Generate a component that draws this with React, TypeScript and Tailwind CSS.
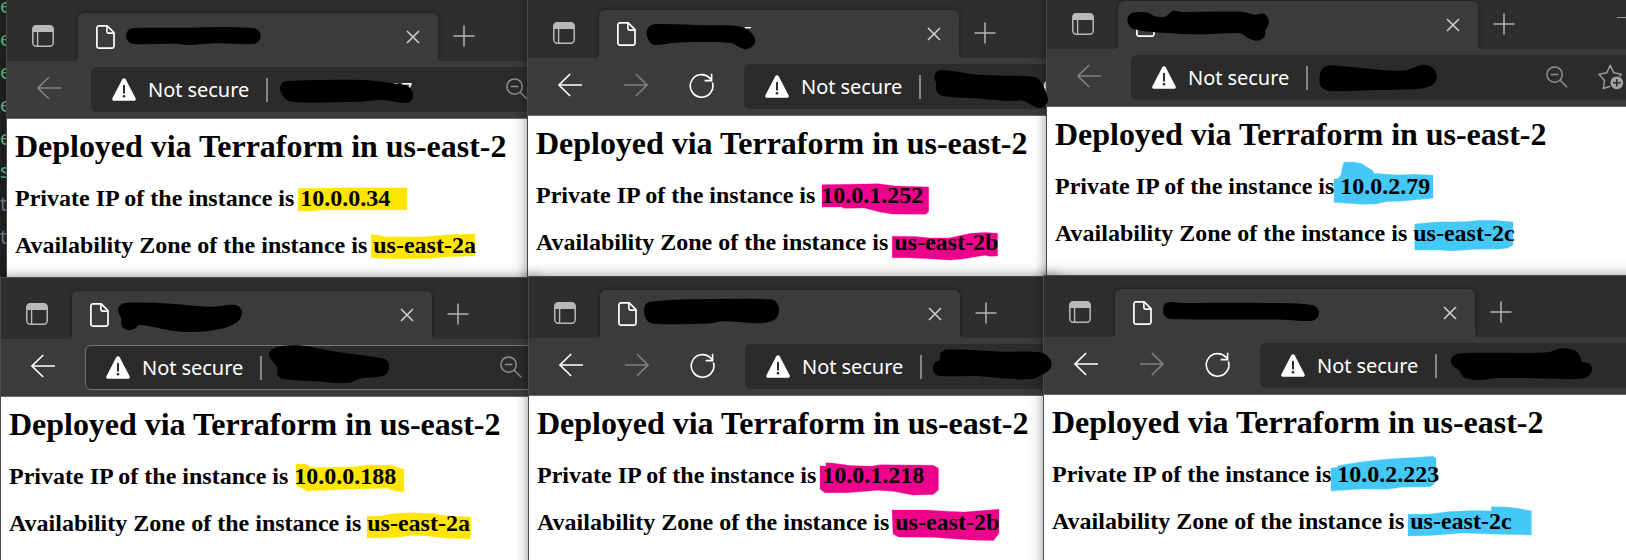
import React from "react";

type Pt = [number, number];

/** Closed smooth outline through the given points, as drawn by a soft marker. */
function outline(points: Pt[]): string {
  const n = points.length;
  const tangent = points.map((_, i) => {
    const a = points[(i + n - 1) % n];
    const b = points[(i + 1) % n];
    const dx = b[0] - a[0];
    const dy = b[1] - a[1];
    const len = Math.hypot(dx, dy) || 1;
    return [dx / len, dy / len] as Pt;
  });
  let d = `M${points[0][0]} ${points[0][1]}`;
  for (let i = 0; i < n; i++) {
    const j = (i + 1) % n;
    const p = points[i];
    const q = points[j];
    const k = Math.hypot(q[0] - p[0], q[1] - p[1]) / 3;
    d += `C${p[0] + tangent[i][0] * k} ${p[1] + tangent[i][1] * k} ${q[0] - tangent[j][0] * k} ${q[1] - tangent[j][1] * k} ${q[0]} ${q[1]}`;
  }
  return d + "Z";
}

const SCRIBBLES: Pt[][] = [
  [[126, 36], [128.6, 30], [134.3, 28], [189.4, 27.8], [220.4, 27], [253, 28], [258.3, 30.5], [260.7, 36], [258.3, 41.5], [253, 44], [220.4, 43.3], [206.6, 43.7], [187.7, 45], [175.6, 43.7], [134.3, 44], [128.6, 41.7]],
  [[280, 89], [281.8, 83.5], [287, 81], [361.6, 80], [389, 82.7], [406, 85.5], [411, 89], [413, 95], [411, 101], [406, 103], [382, 100], [358, 101.7], [292.7, 102], [284.4, 98]],
  [[646.7, 32.7], [649, 26.7], [656, 24], [706, 25.3], [737, 26], [747.3, 29.5], [754.4, 37], [754.4, 44], [747.3, 49], [740.4, 47.7], [730.7, 43], [699, 42], [671.5, 43], [654.3, 45], [649, 40.7]],
  [[934.3, 77.3], [936.7, 71.8], [943.6, 70], [978, 74.7], [1033, 76.7], [1040, 80.7], [1047.9, 98.3], [1045, 105.7], [1038, 107.7], [1022.8, 100.7], [1009, 101], [974.6, 98.3], [941.8, 95.7], [936.2, 90.7], [936.2, 83.3]],
  [[1127.4, 20.7], [1130.4, 14], [1138, 12], [1148.4, 12.7], [1154, 15.7], [1165.2, 16.7], [1172.7, 11], [1182, 12], [1241.8, 11.7], [1254.9, 14.7], [1264.2, 14], [1269, 21.7], [1265.5, 30], [1264.2, 37.3], [1256.7, 40.7], [1247.4, 37.7], [1240, 33.3], [1204.4, 34.3], [1178.3, 33.7], [1133.4, 29]],
  [[1319.5, 81.7], [1321, 71], [1327.7, 65.7], [1357.6, 67.7], [1395, 70.7], [1408, 69.7], [1423, 64.7], [1432.4, 67.7], [1436.9, 76.7], [1432.4, 85], [1417.4, 89], [1376.3, 90], [1329.6, 91], [1321.4, 87.3]],
  [[118, 310.7], [120.5, 305], [127.4, 302.7], [172.2, 303.7], [210, 306.7], [234.2, 304.7], [240, 307.7], [242, 313.3], [237.6, 321.7], [220.4, 329], [192.8, 332], [172.2, 330.7], [140, 325], [134.3, 329], [127.4, 330], [121.6, 326], [121.2, 318.3]],
  [[269, 355.7], [272.3, 349.3], [282.4, 346], [303, 345.7], [337.5, 352], [382.2, 358.3], [388, 361.7], [389, 367.3], [386.4, 374], [378.8, 376.7], [361.6, 378.3], [347.8, 383], [316.8, 381.3], [282.4, 379], [277.5, 375], [276.9, 366.7]],
  [[644, 310], [646.8, 303.2], [657.7, 301], [692.2, 299.3], [771, 299.3], [777.2, 303.3], [779, 310.7], [775.5, 319], [764.5, 322.7], [754.2, 323.3], [723.2, 321.3], [709.4, 323.4], [651.5, 323.4], [645.8, 318.3]],
  [[932.9, 368.3], [935, 362.2], [939.4, 360], [940.6, 353.3], [946, 349.7], [1002, 351.7], [1041.7, 352.7], [1050, 359], [1051, 367.3], [1045, 373.3], [1031.4, 379], [1002, 378.3], [976.3, 376], [939.4, 376], [934, 372.7]],
  [[1163, 310], [1165, 304], [1170.8, 302], [1182, 303], [1264.2, 303], [1312.2, 304.9], [1318.4, 310], [1317.3, 317.7], [1309.8, 321], [1283, 319.7], [1170.8, 319], [1165, 316]],
  [[1451, 362.7], [1453.4, 356], [1462.3, 353.3], [1488.4, 352.7], [1548.2, 352.3], [1561.3, 348.3], [1574.4, 350.3], [1580.2, 356.3], [1582, 361.7], [1588.9, 363.2], [1592.3, 369.3], [1587.4, 376.7], [1578, 379], [1555.7, 378.7], [1499.6, 378], [1477.2, 380], [1463.3, 377.3], [1459.5, 371]],
];

function Ico({ w = 24, h = 24, className = "", children }: { w?: number; h?: number; className?: string; children: React.ReactNode }) {
  return (
    <svg width={w} height={h} viewBox={`0 0 ${w} ${h}`} fill="none" className={`shrink-0 ${className}`}>
      {children}
    </svg>
  );
}

const TabActions = () => (
  <Ico w={22} h={22}>
    <path d="M0.8 7V4.2A3.6 3.6 0 0 1 4.4 0.6h13.2a3.6 3.6 0 0 1 3.6 3.6V7z" fill="#b9b9b9" />
    <rect x="0.8" y="0.8" width="20.4" height="20.4" rx="3.4" stroke="#b9b9b9" strokeWidth="1.5" />
    <path d="M5.6 6v15" stroke="#b9b9b9" strokeWidth="1.4" />
  </Ico>
);

const FileIcon = () => (
  <Ico w={19} h={24}>
    <path d="M3 .9h8.2L18 7.7V21a2 2 0 0 1-2 2.1H3A2 2 0 0 1 .9 21V3A2 2 0 0 1 3 .9z" stroke="#fff" strokeWidth="1.7" />
    <path d="M10.9 1v5.6a1.5 1.5 0 0 0 1.5 1.5H18" stroke="#fff" strokeWidth="1.6" />
  </Ico>
);

const CloseIcon = () => (
  <Ico w={14} h={14}>
    <path d="M1 1l12 12M13 1L1 13" stroke="#cfcfcf" strokeWidth="1.6" />
  </Ico>
);

const PlusIcon = () => (
  <Ico w={22} h={22}>
    <path d="M11 .5v21M.5 11h21" stroke="#b4b4b4" strokeWidth="1.5" />
  </Ico>
);

const BackIcon = ({ dim }: { dim?: boolean }) => (
  <Ico className="mb-[3px]">
    <path d="M12.2 1L1 12l11.2 11M1 12h23" stroke={dim ? "#808080" : "#fff"} strokeWidth="1.6" />
  </Ico>
);

const ForwardIcon = () => (
  <Ico className="mb-[3px]">
    <path d="M11.8 1L23 12 11.8 23M23 12H0" stroke="#808080" strokeWidth="1.6" />
  </Ico>
);

const ReloadIcon = () => (
  <Ico w={25} h={25} className="-ml-px mb-[2px]">
    <path d="M23.4 9.5A11.3 11.3 0 1 1 20.6 4.9L22.4 7" stroke="#fff" strokeWidth="1.6" />
    <path d="M22.6 0.8V7.6H15.6" stroke="#fff" strokeWidth="1.6" />
  </Ico>
);

const WarningIcon = () => (
  <Ico w={24} h={23} className="mb-px">
    <path d="M10.3 1.3a2 2 0 0 1 3.4 0l9.9 18.9a1.8 1.8 0 0 1-1.6 2.6H2a1.8 1.8 0 0 1-1.6-2.6z" fill="#fff" />
    <path d="M12 7.8v7" stroke="#2b2b2b" strokeWidth="2" strokeLinecap="round" />
    <circle cx="12" cy="18.2" r="1.3" fill="#2b2b2b" />
  </Ico>
);

const ZoomOutIcon = () => (
  <Ico w={22} h={22} className="mb-[2px]">
    <circle cx="8.6" cy="8.6" r="7.7" stroke="#8f8f8f" strokeWidth="1.5" />
    <path d="M14.2 14.2l7 7M4.8 8.6h7.6" stroke="#8f8f8f" strokeWidth="1.5" />
  </Ico>
);

const StarAddIcon = () => (
  <Ico w={26} h={26} className="mb-[1px]">
    <path
      d="M12.3 22.3l-7 2.2 1.2-8L1 10.3l7.8-1.5L12.2 1.4l3.5 7.4 7.8 1.5-2 2.2"
      stroke="#9b9b9b"
      strokeWidth="1.5"
      strokeLinejoin="round"
    />
    <circle cx="18.8" cy="18.8" r="6.4" fill="#a3a3a3" />
    <path d="M18.8 15v7.6M15 18.8h7.6" stroke="#2b2b2b" strokeWidth="1.5" />
  </Ico>
);

interface Shot {
  box: string;
  x: number;
  y: number;
  ip: string;
  zone: string;
  color: string;
  marks: Pt[][];
  nav?: boolean;
  dimBack?: boolean;
  focused?: boolean;
  star?: boolean;
  urlTail?: string;
  tailPad?: string;
  tabTail?: string;
}

const SHOTS: Shot[] = [
  {
    box: "left-[6px] top-[-1px] w-[526px] h-[290px]", x: 7, y: 119, ip: "10.0.0.34", zone: "us-east-2a", color: "#ffe600", dimBack: true,
    urlTail: "187", tailPad: "pl-[110px]",
    marks: [
      [[298.2, 188.5], [350, 187.8], [407, 187.7], [407, 210], [320, 210], [310, 211], [298.2, 211]],
      [[371.2, 234.7], [377, 235], [385.7, 236.7], [423.5, 237], [444, 235], [474.9, 233.7], [474.9, 255.7], [444.2, 257], [430, 258.6], [396, 258.7], [371.2, 257.7]],
    ],
  },
  {
    box: "left-[527px] top-[-4px] w-[530px] h-[290px]", x: 528, y: 116, ip: "10.0.1.252", zone: "us-east-2b", color: "#ee008c", nav: true,
    urlTail: "16", tailPad: "pl-[110px]", tabTail: "5",
    marks: [
      [[822, 184.7], [850, 184.3], [878, 183.7], [895.3, 186], [928.7, 187], [928.7, 211.7], [925.6, 214.3], [892, 214], [880, 212], [864.4, 208], [843.7, 208.3], [842, 207], [822, 207]],
      [[892.2, 236.3], [915, 236.6], [930, 238], [949, 238], [971, 233.3], [985, 232.4], [997.6, 233.2], [997.6, 256], [990, 256.3], [985, 255.3], [962, 259], [950.4, 260], [933, 259], [909, 257.7], [892.2, 257.7]],
    ],
  },
  {
    box: "left-[1046px] top-[-13px] w-[640px] h-[300px]", x: 1047, y: 107, ip: "10.0.2.79", zone: "us-east-2c", color: "#43c8f7", dimBack: true, star: true,
    marks: [
      [[1334, 179], [1338, 178.5], [1341, 175], [1342.5, 167], [1343.8, 162.3], [1354, 162], [1361.4, 163.5], [1373.3, 171], [1373.3, 173.3], [1398.7, 175], [1415, 174.3], [1433, 175.3], [1433, 198.3], [1400, 201.2], [1387, 201.4], [1376, 204], [1361, 204.3], [1334, 202.3]],
      [[1414.8, 224], [1436, 222], [1465, 221.7], [1481, 220.3], [1497, 220.6], [1513, 222], [1513, 245], [1508, 248], [1499.6, 249], [1475, 249.3], [1451, 251], [1440, 250], [1414.8, 250]],
    ],
  },
  {
    box: "left-0 top-[277px] w-[538px] h-[300px]", x: 1, y: 397, ip: "10.0.0.188", zone: "us-east-2a", color: "#ffe600", focused: true,
    marks: [
      [[295.8, 464], [304.8, 464], [311.6, 467.6], [351, 467], [368.5, 465], [392.6, 465.3], [399.4, 468.2], [403.9, 469.3], [403.9, 491.7], [396, 491.3], [387.4, 488.2], [344.4, 489.3], [306.5, 491], [296.8, 485]],
      [[367, 516.3], [378.8, 516.3], [396, 513.2], [413.2, 512.7], [432, 513.6], [447.7, 516], [470.7, 517], [470.7, 539], [444.2, 538], [427, 536], [413, 535.3], [396, 537.6], [367, 538]],
    ],
  },
  {
    box: "left-[528px] top-[276px] w-[530px] h-[300px]", x: 529, y: 396, ip: "10.0.1.218", zone: "us-east-2b", color: "#ee008c", nav: true,
    marks: [
      [[820, 466], [826, 466], [826, 462.7], [834, 463.2], [850, 465.6], [871.2, 466.3], [880, 464.7], [933.2, 465.3], [938.4, 468.3], [938.4, 490], [933.2, 494.5], [912.6, 495], [893, 491.3], [878, 490.3], [847, 492.7], [824.8, 492.7], [820, 489]],
      [[892, 510], [926.3, 510], [950, 511.4], [964.2, 512], [999, 509.2], [999, 533.3], [993.5, 540.5], [971, 540], [933, 537.3], [898.8, 537], [893, 534]],
    ],
  },
  {
    box: "left-[1043px] top-[275px] w-[640px] h-[300px]", x: 1044, y: 395, ip: "10.0.2.223", zone: "us-east-2c", color: "#43c8f7", nav: true,
    marks: [
      [[1331, 468], [1337.8, 467.3], [1337.8, 465.7], [1360, 462], [1391, 458.7], [1415, 457.4], [1433, 456.2], [1436, 458.3], [1436, 481.7], [1430.5, 486.7], [1402.5, 487], [1387.5, 489.3], [1361.4, 489], [1331, 491]],
      [[1408, 514.3], [1430, 514], [1450, 511.6], [1475, 510.4], [1491.4, 511], [1491.4, 506.7], [1507, 507], [1520, 508.8], [1531.4, 511], [1531.4, 535], [1500, 534.2], [1462.3, 533], [1430, 535.4], [1408, 536]],
    ],
  },
];

/** Straight-edged highlighter band. */
const band = (pts: Pt[]) => "M" + pts.map((p) => p.join(" ")).join("L") + "Z";

function BrowserWindow({ s }: { s: Shot }) {
  return (
    <section className={`absolute ${s.box} flex flex-col border-l border-t border-[#4a4a4a] bg-white shadow-[0_0_12px_rgba(0,0,0,0.42)]`}>
      <div className="flex h-[61px] shrink-0 items-end overflow-hidden bg-[#2e2e2e] pl-[25px]">
        <div className="mb-[14px] mr-6">
          <TabActions />
        </div>
        <div className="relative flex h-12 w-[360px] shrink-0 items-center justify-between rounded-t-[6px] bg-[#3b3b3b] pl-[18px] pr-[18px] shadow-[0_0_4px_rgba(0,0,0,0.5)]">
          <div className="flex items-center gap-[107px]">
            <FileIcon />
            {s.tabTail && <span className="pb-[3px] font-['Noto_Sans',sans-serif] text-[17px] leading-none text-white">{s.tabTail}</span>}
          </div>
          <CloseIcon />
          <span className="absolute -left-[5px] bottom-0 h-[5px] w-[5px] bg-[radial-gradient(circle_at_0_0,transparent_5px,#3b3b3b_5.5px)]" />
          <span className="absolute -right-[5px] bottom-0 h-[5px] w-[5px] bg-[radial-gradient(circle_at_100%_0,transparent_5px,#3b3b3b_5.5px)]" />
        </div>
        <div className="mb-[14px] ml-[15px]">
          <PlusIcon />
        </div>
        {s.star && <div className="mb-[31px] ml-[102px] h-px w-5 shrink-0 bg-[#9a9a9a]" />}
      </div>
      <div className="flex h-[58px] shrink-0 items-center overflow-hidden border-b border-[#6b6969] bg-[#3b3b3b] pl-[30px]">
        <div className="flex items-center gap-[42px]">
          <BackIcon dim={s.dimBack} />
          {s.nav && <ForwardIcon />}
          {s.nav && <ReloadIcon />}
        </div>
        <div
          className={`ml-[30px] flex h-[45px] w-[560px] shrink-0 items-center rounded-[6px] bg-[#2b2b2b] ${
            s.focused ? "border border-[#757575] pl-5" : "pl-[21px]"
          }`}
        >
          <WarningIcon />
          <span className="ml-3 w-[103px] whitespace-nowrap font-['Noto_Sans',sans-serif] text-[20px] leading-6 tracking-[-0.05px] text-white">Not secure</span>
          <span className="ml-[15px] h-6 w-[2px] shrink-0 bg-[#858585]" />
          <span className={`w-[238px] shrink-0 font-['Noto_Sans',sans-serif] text-[20px] leading-6 text-white ${s.tailPad ?? ""}`}>{s.urlTail}</span>
          <ZoomOutIcon />
          {s.star && (
            <div className="ml-[30px]">
              <StarAddIcon />
            </div>
          )}
        </div>
      </div>
      <main className="relative flex-1 whitespace-nowrap pl-2 pt-[9px] font-['Liberation_Serif',serif] font-bold text-black">
        <svg className="absolute left-0 top-0" width="510" height="150" viewBox={`${s.x} ${s.y} 510 150`} fill={s.color} stroke={s.color} strokeLinejoin="round" strokeWidth="0.3">
          {s.marks.map((m, i) => (
            <path key={i} d={band(m)} />
          ))}
        </svg>
        <h1 className="relative text-[32px] leading-9 tracking-[-0.03px]">Deployed via Terraform in us-east-2</h1>
        <h3 className="relative mt-[21px] text-[24px] leading-[27px]">Private IP of the instance is {s.ip}</h3>
        <h3 className="relative mt-5 text-[24px] leading-[27px]">Availability Zone of the instance is {s.zone}</h3>
      </main>
    </section>
  );
}

const GUTTER = ["e", "e", "e", "e", "e", "s", "t", "t"];

export default function App() {
  return (
    <div className="relative h-[560px] w-[1626px] overflow-hidden bg-[#222222]">
      <div className="-mt-[11px] flex w-4 flex-col font-['Noto_Sans',sans-serif] text-[20px] leading-[33px]">
        {GUTTER.map((c, i) => (
          <span key={i} className={c === "t" ? "text-[#7d8590]" : "text-[#62c585]"}>
            {c}
          </span>
        ))}
      </div>
      {SHOTS.map((s, i) => (
        <BrowserWindow key={i} s={s} />
      ))}
      <svg className="pointer-events-none absolute left-0 top-0" width="1626" height="560" viewBox="0 0 1626 560" fill="#000">
        {SCRIBBLES.map((p, i) => (
          <path key={i} d={outline(p)} />
        ))}
      </svg>
    </div>
  );
}
